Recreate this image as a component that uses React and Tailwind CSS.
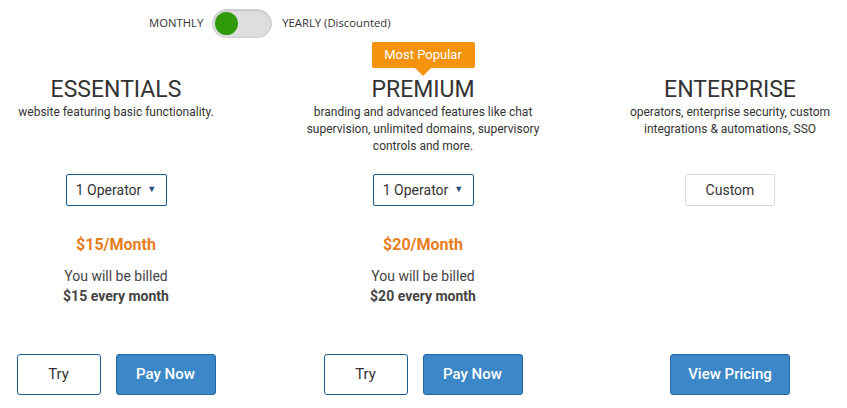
import { useState } from "react";

const PLANS = [
  {
    id: "essentials",
    title: "ESSENTIALS",
    desc: "website featuring basic functionality.",
    select: "1 Operator",
    price: "$15/Month",
    billed: "$15 every month",
    actions: ["try", "pay"],
  },
  {
    id: "premium",
    title: "PREMIUM",
    popular: true,
    desc: "branding and advanced features like chat supervision, unlimited domains, supervisory controls and more.",
    select: "1 Operator",
    price: "$20/Month",
    billed: "$20 every month",
    actions: ["try", "pay"],
  },
  {
    id: "enterprise",
    title: "ENTERPRISE",
    desc: "operators, enterprise security, custom integrations & automations, SSO",
    custom: true,
    actions: ["pricing"],
  },
];

function Toggle({ yearly, onChange }) {
  return (
    <div className="flex items-center pl-[149px] pt-[9px] h-[38px] font-['Open_Sans',sans-serif] text-[11.3px] text-[#333]">
      <span>MONTHLY</span>
      <button
        onClick={() => onChange(!yearly)}
        className="ml-[9px] w-[60px] h-[29px] rounded-full bg-[#dedede] border border-[#d0d0d0] shadow-[inset_0_1px_2px_rgba(0,0,0,0.12)] flex items-center px-[2px]"
      >
        <span
          className={
            yearly
              ? "w-[23px] h-[23px] rounded-full bg-[#2f9a0a] ml-auto"
              : "w-[23px] h-[23px] rounded-full bg-[#2f9a0a]"
          }
        />
      </button>
      <span className="ml-[10px]">YEARLY (Discounted)</span>
    </div>
  );
}

function PlanColumn({ plan }) {
  return (
    <div className="flex flex-col items-center text-center">
      <div className="h-[39px] flex flex-col items-center">
        {plan.popular && (
          <div className="relative mt-[4px] w-[103px] h-[26px] bg-[#f5930f] rounded-[2px] text-white text-[13px] leading-[26px]">
            Most Popular
            <span className="absolute left-1/2 -translate-x-1/2 top-[26px] w-0 h-0 border-l-[8px] border-r-[8px] border-t-[8px] border-l-transparent border-r-transparent border-t-[#f5930f]" />
          </div>
        )}
      </div>
      <h2 className="text-[23px] leading-[26px] font-normal text-[#333]">{plan.title}</h2>
      <p className="mt-[1px] w-[240px] shrink-0 h-[70px] text-[12px] leading-[17px] text-[#333]">{plan.desc}</p>

      {plan.custom ? (
        <button className="w-[90px] h-[32px] border border-[#dcdcdc] rounded-[2px] text-[14px] text-[#333]">
          Custom
        </button>
      ) : (
        <button className="w-[101px] h-[32px] border border-[#1d5c92] rounded-[2px] text-[14px] text-[#333] flex items-center justify-center gap-[6px]">
          {plan.select}
          <span className="text-[9px] text-[#1d4e7c]">▼</span>
        </button>
      )}

      <div className="h-[148px] w-full">
        {plan.price && (
          <>
            <div className="mt-[29px] text-[16px] leading-[20px] font-bold text-[#e67e1e]">{plan.price}</div>
            <div className="mt-[11px] text-[14px] leading-[20px] text-[#444]">
              You will be billed
              <div className="font-bold">{plan.billed}</div>
            </div>
          </>
        )}
      </div>

      <div className="flex gap-[15px]">
        {plan.actions.includes("try") && (
          <button className="w-[84px] h-[41px] border border-[#1d5c92] rounded-[3px] bg-white text-[15px] text-[#333]">
            Try
          </button>
        )}
        {plan.actions.includes("pay") && (
          <button className="w-[100px] h-[41px] border border-[#2567a3] rounded-[3px] bg-[#3c87c8] text-[15px] font-medium text-white">
            Pay Now
          </button>
        )}
        {plan.actions.includes("pricing") && (
          <button className="w-[120px] h-[41px] border border-[#2567a3] rounded-[3px] bg-[#3c87c8] text-[15px] font-medium text-white">
            View Pricing
          </button>
        )}
      </div>
    </div>
  );
}

export default function App() {
  const [yearly, setYearly] = useState(false);

  return (
    <div className="w-[847px] h-[408px] bg-white overflow-hidden font-['Roboto',sans-serif]">
      <Toggle yearly={yearly} onChange={setYearly} />
      <div className="grid grid-cols-[232px_232px_232px] gap-x-[75px]">
        {PLANS.map((p) => (
          <PlanColumn key={p.id} plan={p} />
        ))}
      </div>
    </div>
  );
}
